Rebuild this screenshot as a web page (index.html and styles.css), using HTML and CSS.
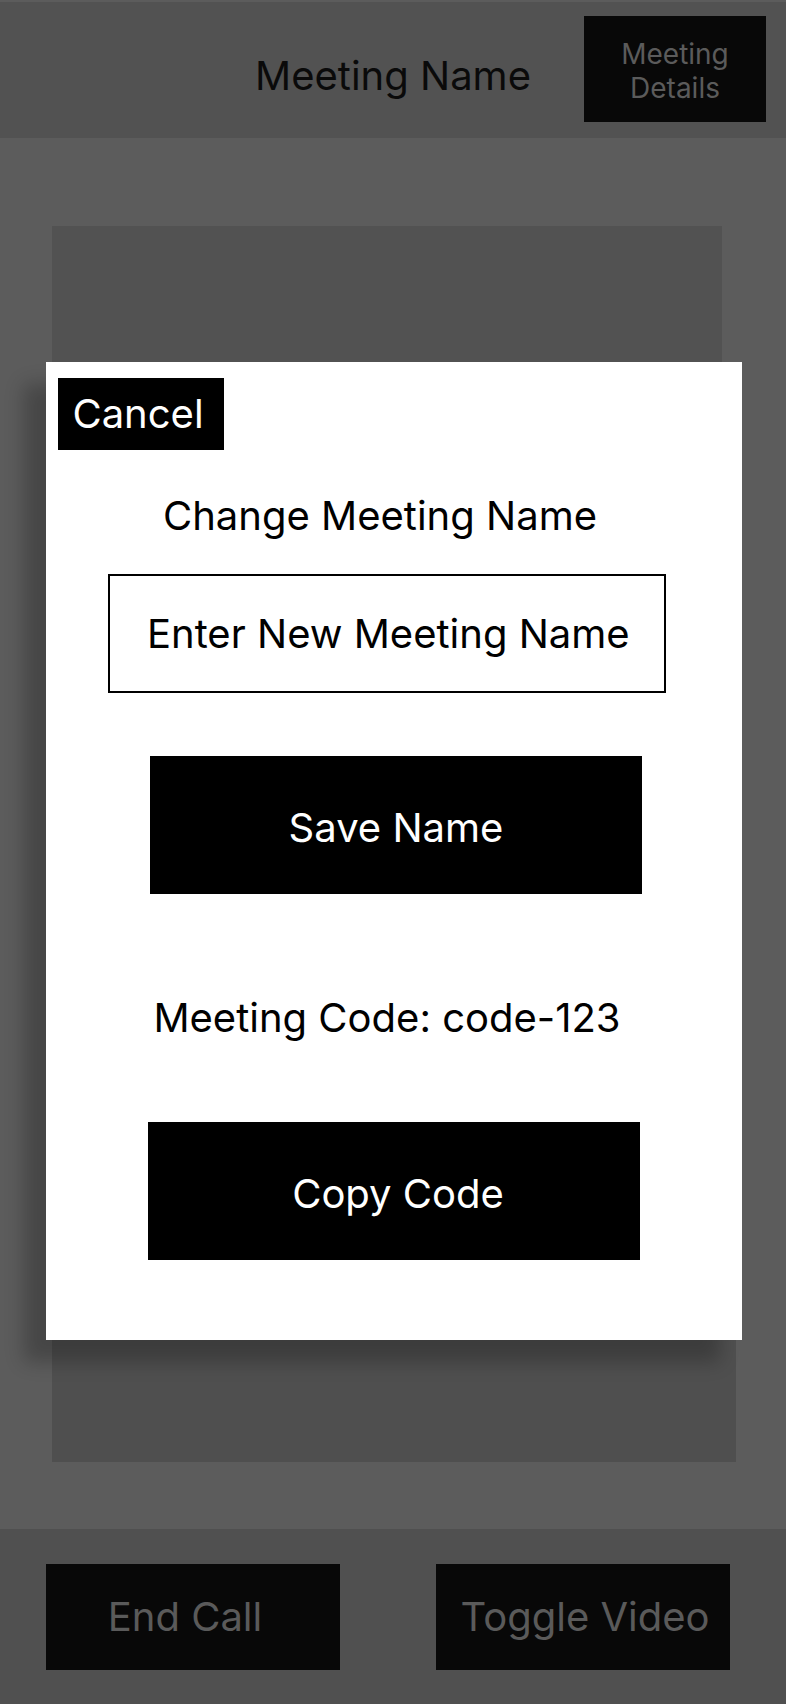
FILE: index.html
```html
<!DOCTYPE html>
<html lang="en">
<head>
<meta charset="utf-8">
<title>Meeting</title>
<link rel="stylesheet" href="styles.css">
</head>
<body>
<div class="screen">
  <header class="topbar">
    <div class="topbar-side"></div>
    <h1 class="topbar-title">Meeting Name</h1>
    <div class="topbar-side topbar-side-right">
      <button class="details-btn">Meeting Details</button>
    </div>
  </header>
  <main class="stage">
    <div class="video video-remote"></div>
    <div class="video video-local"></div>
  </main>
  <footer class="controls">
    <button class="control-btn end-btn">End Call</button>
    <button class="control-btn toggle-btn">Toggle Video</button>
  </footer>

  <div class="modal">
    <button class="cancel-btn">Cancel</button>
    <h2 class="modal-title">Change Meeting Name</h2>
    <input class="name-input" type="text" placeholder="Enter New Meeting Name">
    <button class="action-btn save-btn">Save Name</button>
    <p class="code-text">Meeting Code: code-123</p>
    <button class="action-btn copy-btn">Copy Code</button>
  </div>
</div>
</body>
</html>
```

FILE: styles.css
```css
* {
  box-sizing: border-box;
}

html, body {
  margin: 0;
  padding: 0;
  background: #5c5c5c;
}

body {
  font-family: Inter, "Noto Sans", "Liberation Sans", sans-serif;
}

button, input {
  font-family: inherit;
}

.screen {
  position: relative;
  width: 786px;
  height: 1704px;
  padding-top: 2px;
  display: flex;
  flex-direction: column;
  background: #5c5c5c;
  overflow: hidden;
}

/* Header */
.topbar {
  height: 136px;
  flex: 0 0 136px;
  background: #525252;
  display: grid;
  grid-template-columns: 1fr auto 1fr;
  align-items: center;
}

.topbar-title {
  margin: 11px 0 0 0;
  font-size: 40px;
  font-weight: 400;
  line-height: 48px;
  color: #0a0a0a;
}

.topbar-side-right {
  display: flex;
  justify-content: flex-end;
  padding-right: 20px;
}

.details-btn {
  width: 182px;
  height: 106px;
  margin-top: -2px;
  padding: 4px 14px 0;
  border: none;
  background: #080808;
  color: #5b5b5b;
  font-size: 28px;
  line-height: 34px;
  text-align: center;
}

/* Stage with videos */
.stage {
  flex: 1 1 auto;
  padding: 88px 0 0 52px;
  display: flex;
  flex-direction: column;
  align-items: flex-start;
}

.video {
  background: #525252;
}

.video-remote {
  width: 670px;
  height: 600px;
}

.video-local {
  width: 684px;
  height: 636px;
  background: #4f4f4f;
}

/* Footer controls */
.controls {
  height: 175px;
  flex: 0 0 175px;
  background: #505050;
  padding: 35px 56px 0 46px;
  display: flex;
  justify-content: space-between;
  align-items: flex-start;
}

.control-btn {
  width: 294px;
  height: 106px;
  border: none;
  padding: 0;
  background: #080808;
  color: #5a5a5a;
  font-size: 40px;
  line-height: 48px;
}

.end-btn {
  padding-right: 16px;
}

.toggle-btn {
  padding-left: 4px;
}

/* Modal */
.modal {
  position: absolute;
  left: 46px;
  top: 362px;
  width: 696px;
  height: 978px;
  background: #ffffff;
  box-shadow: -22px 22px 18px rgba(0, 0, 0, 0.24);
  display: flex;
  flex-direction: column;
  align-items: flex-start;
}

.cancel-btn {
  margin: 16px 0 0 12px;
  width: 166px;
  height: 72px;
  padding: 0 6px 0 0;
  border: none;
  background: #000;
  color: #fff;
  font-size: 40px;
  line-height: 48px;
  text-align: center;
}

.modal-title {
  align-self: stretch;
  margin: 42px 0 0 0;
  padding-right: 28px;
  font-size: 40px;
  font-weight: 400;
  line-height: 48px;
  text-align: center;
  color: #000;
}

.name-input {
  margin: 34px 0 0 62px;
  width: 558px;
  height: 119px;
  border: 2px solid #000;
  border-radius: 0;
  padding: 0 0 0 37px;
  background: #fff;
  color: #000;
  font-size: 40px;
  outline: none;
}

.name-input::placeholder {
  color: #000;
  opacity: 1;
}

.action-btn {
  width: 492px;
  height: 138px;
  border: none;
  padding: 6px 0 0 0;
  background: #000;
  color: #fff;
  font-size: 40px;
  line-height: 48px;
}

.save-btn {
  margin: 63px 0 0 104px;
}

.code-text {
  align-self: stretch;
  margin: 100px 0 0 0;
  padding-right: 14px;
  font-size: 40px;
  line-height: 48px;
  text-align: center;
  color: #000;
}

.copy-btn {
  margin: 80px 0 0 102px;
  padding-left: 8px;
}
```
